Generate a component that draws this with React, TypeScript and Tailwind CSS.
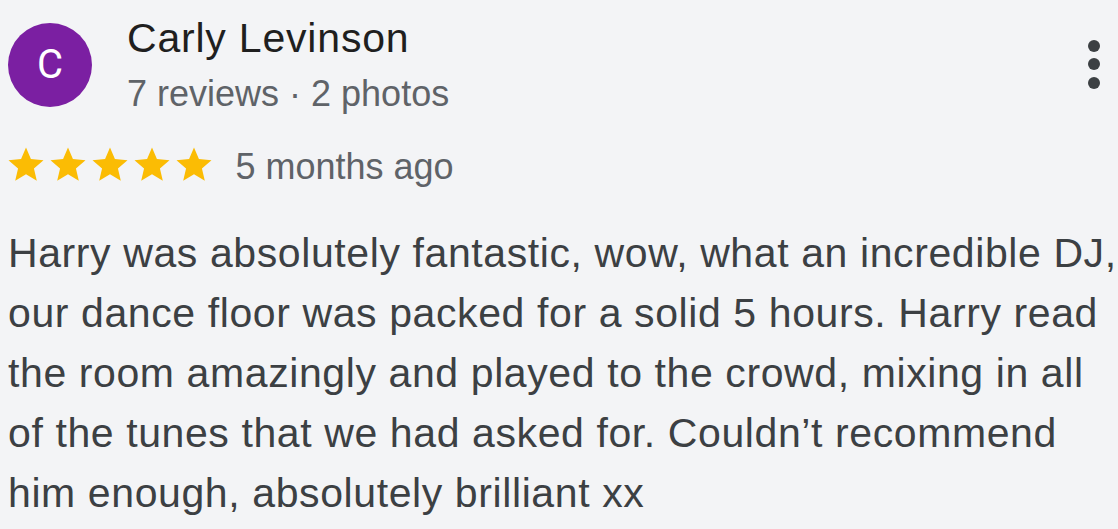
const Star = () => (
  <svg viewBox="0 0 24 24" className="w-[42px] h-[42px] shrink-0" fill="#fbbc04">
    <path d="M12 17.27L18.18 21l-1.64-7.03L22 9.24l-7.19-.61L12 2 9.19 8.63 2 9.24l5.46 4.73L5.82 21z" />
  </svg>
)

const lines = [
  'Harry was absolutely fantastic, wow, what an incredible DJ,',
  'our dance floor was packed for a solid 5 hours. Harry read',
  'the room amazingly and played to the crowd, mixing in all',
  'of the tunes that we had asked for. Couldn’t recommend',
  'him enough, absolutely brilliant xx',
]

export default function App() {
  return (
    <div className="w-[1118px] h-[529px] bg-[#f3f4f6] overflow-hidden font-['Liberation_Sans',Arial,sans-serif]">
      <div className="flex items-start pt-[20px] pl-[8px] pr-[18px]">
        <div className="mt-[3px] w-[84px] h-[84px] rounded-full bg-[#7b1fa2] flex items-center justify-center text-white text-[40px] font-['Roboto',sans-serif] shrink-0">
          C
        </div>
        <div className="ml-[35px] flex-1">
          <div className="text-[41px] leading-[36px] tracking-[0.8px] text-[#1f1f1f]">Carly Levinson</div>
          <div className="text-[36px] leading-[36px] text-[#5f6368] mt-[20px]">7 reviews · 2 photos</div>
        </div>
        <div className="flex flex-col gap-[6.5px] mt-[19.5px]">
          <span className="w-[12px] h-[12px] rounded-full bg-[#3c4043]" />
          <span className="w-[12px] h-[12px] rounded-full bg-[#3c4043]" />
          <span className="w-[12px] h-[12px] rounded-full bg-[#3c4043]" />
        </div>
      </div>
      <div className="flex items-start pl-[5px] mt-[32px]">
        <div className="flex">
          <Star />
          <Star />
          <Star />
          <Star />
          <Star />
        </div>
        <span className="ml-[20.5px] mt-[1.5px] text-[36px] text-[#5f6368] leading-[42px]">5 months ago</span>
      </div>
      <p className="pl-[8px] mt-[35.5px] text-[41px] leading-[60px] tracking-[0.6px] text-[#3c4043]">
        {lines.map((l) => (
          <span key={l} className="block whitespace-nowrap">
            {l}
          </span>
        ))}
      </p>
    </div>
  )
}
